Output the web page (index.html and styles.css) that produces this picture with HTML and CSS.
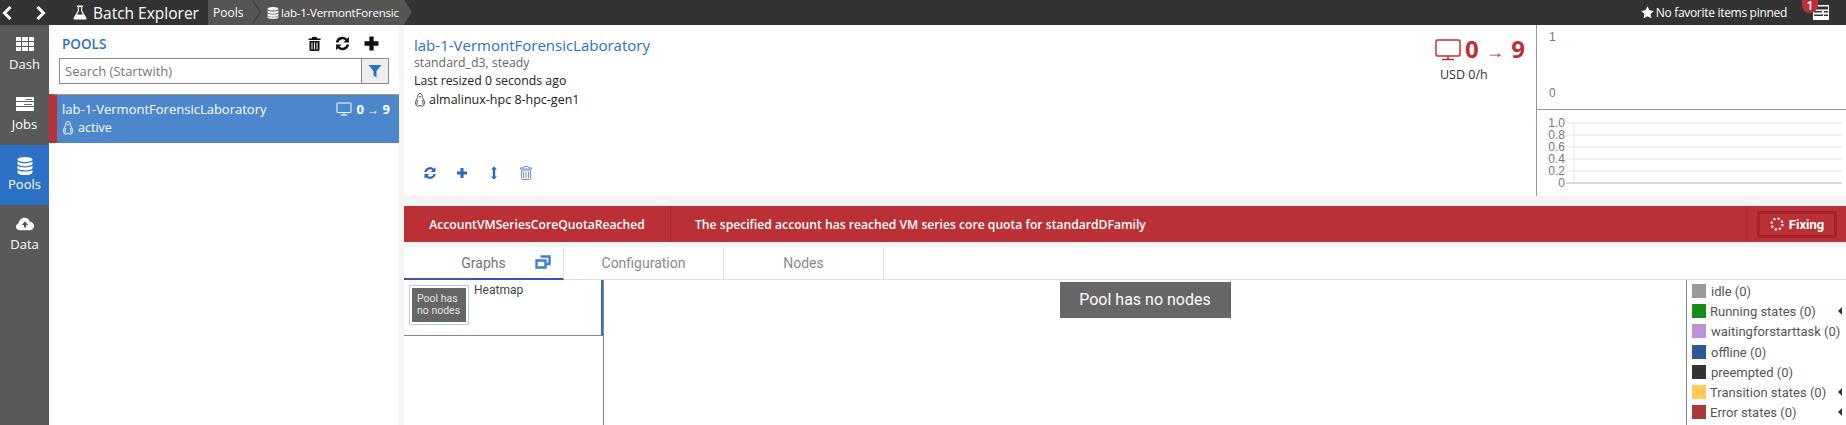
FILE: index.html
```html
<!DOCTYPE html>
<html lang="en">
<head>
<meta charset="utf-8">
<title>Batch Explorer</title>
<link rel="stylesheet" href="styles.css">
</head>
<body>
<header class="topbar">
  <svg class="nav-chevron back" viewBox="0 0 10 14"><path d="M8.500 1 2.500 7l6 6" fill="none" stroke="#fff" stroke-width="3"/></svg>
  <svg class="nav-chevron forward" viewBox="0 0 10 14"><path d="m1.500 1 6 6-6 6" fill="none" stroke="#fff" stroke-width="3"/></svg>
  <svg class="flask" viewBox="0 0 14 15"><path d="M4 .5h6v1.200H9.200v4L13.400 13c.4.900-.1 1.600-1 1.600H1.600c-.9 0-1.400-.7-1-1.600l4.200-7.300V1.700H4z" fill="#fff"/><path d="M6 2v4L4 9.500h6L8 6V2z" fill="#333"/></svg>
  <span class="app-name">Batch Explorer</span>
  <nav class="crumbs">
    <span class="crumb crumb-first">Pools</span>
    <span class="crumb crumb-second">
      <svg class="crumb-db" viewBox="0 0 12 12"><path d="M6 0c3 0 5.500.8 5.500 1.800S9 3.600 6 3.600.5 2.800.5 1.800 3 0 6 0zM.5 3.200C1.500 4.200 3.700 4.500 6 4.500s4.500-.3 5.500-1.300v1.700c0 1-2.500 1.800-5.500 1.800S.5 5.900.5 4.900zM.5 6.200c1 1 3.200 1.300 5.500 1.300s4.500-.3 5.500-1.300v1.700c0 1-2.500 1.800-5.500 1.800S.5 8.900.5 7.900zM.5 9.100c1 1 3.200 1.300 5.500 1.300s4.500-.3 5.500-1.300v1.200c0 1-2.500 1.700-5.500 1.700S.5 11.300.5 10.300z" fill="#fff"/></svg>
      <span class="crumb-text">lab-1-VermontForensic</span>
    </span>
  </nav>
  <div class="top-right">
    <svg class="star" viewBox="0 0 12 12"><path d="m6 .2 1.800 3.700 4 .6-2.900 2.800.7 4L6 9.400l-3.600 1.900.7-4L.2 4.500l4-.6z" fill="#fff"/></svg>
    <span class="fav-text">No favorite items pinned</span>
    <span class="notif">
      <svg class="notif-icon" viewBox="0 0 18 18"><path d="M1 2h16v15H1z" fill="#fff"/><path d="M2 3.500h14v3H2zM2 8h8v1.500H2zM2 11.500h9V13H2z" fill="#333"/><path d="M12 8h4v1.500h-4zM12 11.500h4V13h-4z" fill="#333"/></svg>
      <span class="badge">1</span>
    </span>
  </div>
</header>

<div class="app">
  <aside class="sidebar">
    <a class="side-item">
      <svg class="side-icon" viewBox="0 0 18 14"><path d="M0 0h5v4H0zM6 0h6v4H6zM13 0h5v4h-5zM0 5h5v4H0zM6 5h6v4H6zM13 5h5v4h-5zM0 10h5v4H0zM6 10h6v4H6zM13 10h5v4h-5z" fill="#fff"/></svg>
      <span>Dash</span>
    </a>
    <a class="side-item">
      <svg class="side-icon" viewBox="0 0 18 14"><path d="M0 0h18v4H0zM0 5h18v4H0zM0 10h18v4H0z" fill="#fff"/><path d="M10 2h6v1h-6zM8 7h8v1H8z" fill="#666"/></svg>
      <span>Jobs</span>
    </a>
    <a class="side-item side-active">
      <svg class="side-icon" viewBox="0 0 16 18"><path d="M8 0c4 0 7.500 1 7.500 2.500S12 5 8 5 .5 4 .5 2.500 4 0 8 0zM.5 4.500C2 5.800 5 6.200 8 6.200s6-.4 7.500-1.700v2.200C15.500 8 12 9.200 8 9.200S.5 8 .5 6.700zM.5 8.800C2 10 5 10.400 8 10.400s6-.4 7.500-1.600V11c0 1.300-3.500 2.400-7.500 2.400S.5 12.300.5 11zM.5 13c1.500 1.200 4.500 1.600 7.500 1.600s6-.4 7.500-1.600v2.400c0 1.400-3.500 2.600-7.500 2.600S.5 16.800.5 15.400z" fill="#fff"/></svg>
      <span>Pools</span>
    </a>
    <a class="side-item">
      <svg class="side-icon" viewBox="0 0 20 14"><path d="M4.500 14C2 14 0 12.200 0 10c0-1.800 1.200-3.200 3-3.700C3.300 3 6 0 9.500 0c2.700 0 5 1.700 5.800 4.200 2.700.2 4.700 2.400 4.700 5 0 2.700-2.200 4.800-5 4.800z" fill="#fff"/><path d="M10 4 6.500 8h2.300v3h2.400V8h2.300z" fill="#555"/></svg>
      <span>Data</span>
    </a>
  </aside>

  <section class="list-pane">
    <div class="list-head">
      <h2 class="list-title">POOLS</h2>
      <div class="list-actions">
        <svg class="act-icon" viewBox="0 0 12 14"><path d="M4 0h4l1 1.500h3V3H0V1.500h3zM1 4h10v8.500c0 .8-.6 1.500-1.400 1.500H2.400C1.600 14 1 13.300 1 12.500z" fill="#111"/><path d="M3 5.500h1v7H3zM5.500 5.500h1v7h-1zM8 5.500h1v7H8z" fill="#fff"/></svg>
        <svg class="act-icon act-wide" viewBox="0 0 14 14"><path d="M.8 6A6.200 6.200 0 0 1 11.300 2.500L13 .8V6H7.800l1.900-1.900A3.900 3.900 0 0 0 3.200 6zM13.200 8A6.200 6.200 0 0 1 2.700 11.500L1 13.200V8h5.200l-1.900 1.900a3.900 3.900 0 0 0 6.500-1.900z" fill="#111"/></svg>
        <svg class="act-icon act-wide" viewBox="0 0 14 14"><path d="M5 .5h4V5h4.500v4H9v4.500H5V9H.5V5H5z" fill="#111"/></svg>
      </div>
    </div>
    <div class="search">
      <span class="search-text">Search (Startwith)</span>
      <span class="search-btn"><svg class="filter" viewBox="0 0 14 14"><path d="M.5 1h13L8.500 7v6.500l-3-2V7z" fill="#2b71c6"/></svg></span>
    </div>
    <div class="pool-row">
      <div class="pool-main">
        <span class="pool-name">lab-1-VermontForensicLaboratory</span>
        <span class="pool-count">
          <svg class="mon" viewBox="0 0 16 14"><path d="M1.500 1h13c.3 0 .5.200.5.500v8.500c0 .3-.2.500-.5.500h-13a.5.500 0 0 1-.5-.5V1.500c0-.3.200-.5.500-.5zM8 10.500V13M4.500 13h7" fill="none" stroke="#fff" stroke-width="1"/></svg>
          <b>0 <i>→</i> 9</b>
        </span>
      </div>
      <div class="pool-state">
        <svg class="tux" viewBox="0 0 12 14"><path d="M6 .5c1.500 0 2.200 1.200 2.200 2.700 0 1.800 2.300 4.200 2.300 6.600 0 1-.3 1.700-.9 2.200.5.800-.5 1.500-1.600 1-.6-.3-1.200-.4-2-.4s-1.400.1-2 .4c-1.100.5-2.100-.2-1.600-1-.6-.5-.9-1.200-.9-2.200 0-2.400 2.300-4.800 2.300-6.600C3.800 1.700 4.500.5 6 .5zM4 7c-1 1.500-1.200 3-.7 4.500M8 7c1 1.500 1.200 3 .7 4.500" fill="none" stroke="#fff"/><path d="M4.800 3h2.400L6 4.500z" fill="#fff"/></svg>
        <span>active</span>
      </div>
    </div>
  </section>

  <main class="detail">
    <section class="summary">
      <div class="summary-info">
        <h1 class="pool-title">lab-1-VermontForensicLaboratory</h1>
        <div class="muted">standard_d3, steady</div>
        <div class="line">Last resized 0 seconds ago</div>
        <div class="line os-line">
          <svg class="tux-dark" viewBox="0 0 12 14"><path d="M6 .5c1.500 0 2.200 1.200 2.200 2.700 0 1.800 2.300 4.200 2.300 6.600 0 1-.3 1.700-.9 2.200.5.800-.5 1.500-1.600 1-.6-.3-1.200-.4-2-.4s-1.400.1-2 .4c-1.100.5-2.100-.2-1.600-1-.6-.5-.9-1.200-.9-2.200 0-2.400 2.300-4.800 2.300-6.600C3.800 1.700 4.500.5 6 .5zM4 7c-1 1.500-1.200 3-.7 4.500M8 7c1 1.500 1.200 3 .7 4.500" fill="none" stroke="#555"/><path d="M4.800 3h2.400L6 4.500z" fill="#333"/></svg>
          <span>almalinux-hpc 8-hpc-gen1</span>
        </div>
        <div class="tools">
          <svg class="tool" viewBox="0 0 14 14"><path d="M1.300 6A5.800 5.800 0 0 1 11 2.700L12.500 1.200V6H7.800l1.700-1.700A3.600 3.600 0 0 0 3.500 6zM12.700 8A5.800 5.800 0 0 1 3 11.300L1.500 12.800V8h4.700l-1.700 1.700a3.600 3.600 0 0 0 6-1.700z" fill="#2b62c4"/></svg>
          <svg class="tool" viewBox="0 0 14 14"><path d="M5.500 2h3v3.500H12v3H8.500V12h-3V8.500H2v-3h3.500z" fill="#2b62c4"/></svg>
          <svg class="tool" viewBox="0 0 14 14"><path d="M7 .5 10 3.500H8.200v7H10L7 13.500l-3-3h1.800v-7H4z" fill="#2b62c4"/></svg>
          <svg class="tool" viewBox="0 0 12 14"><path d="M4 .5h4l.7 1.300H11.500v1.200H.5V1.800h2.800zM1.500 4h9v8.500c0 .6-.4 1-1 1h-7c-.6 0-1-.4-1-1zM3.500 5.500v6.500M6 5.500v6.500M8.500 5.500v6.500" fill="none" stroke="#6f90dc"/></svg>
        </div>
      </div>
      <div class="summary-nodes">
        <div class="big-count">
          <svg class="mon-big" viewBox="0 0 26 22"><path d="M2.500 1h21c.8 0 1.500.7 1.500 1.500v13c0 .8-.7 1.500-1.500 1.500h-21c-.8 0-1.500-.7-1.500-1.500v-13C1 1.700 1.700 1 2.500 1zM13 17v3.500M7 20.500h12" fill="none" stroke="#bb2f36" stroke-width="1.500"/></svg>
          <span class="big-num">0 <i>→</i> 9</span>
        </div>
        <div class="usd">USD 0/h</div>
      </div>
      <div class="charts">
        <div class="chart-top">
          <span>1</span>
          <span>0</span>
        </div>
        <svg class="chart-bottom" width="309" height="86" viewBox="0 0 309 86">
          <g class="grid">
            <path d="M29 13h276M29 25h276M29 37h276M29 49h276M29 61h276M37 13v60"/>
          </g>
          <path class="grid-base" d="M29 73h276"/>
          <g class="axis">
            <text x="28" y="17">1.0</text>
            <text x="28" y="29">0.8</text>
            <text x="28" y="41">0.6</text>
            <text x="28" y="53">0.4</text>
            <text x="28" y="65">0.2</text>
            <text x="28" y="77">0</text>
          </g>
        </svg>
      </div>
    </section>

    <section class="banner">
      <div class="banner-code">AccountVMSeriesCoreQuotaReached</div>
      <div class="banner-msg">The specified account has reached VM series core quota for standardDFamily</div>
      <div class="banner-action">
        <button class="fix-btn">
          <svg class="spin" viewBox="0 0 14 14"><circle cx="7" cy="7" r="5.500" fill="none" stroke="#fff" stroke-width="2.200" stroke-dasharray="2.200 2.100"/></svg>
          <span>Fixing</span>
        </button>
      </div>
    </section>

    <section class="tabs-pane">
      <div class="tabs">
        <div class="tab tab-active">
          <span>Graphs</span>
          <svg class="tab-icon" viewBox="0 0 16 14"><path d="M5.500 1.500h9v7.500h-4" fill="none" stroke="#3f7fd0" stroke-width="2.400"/><path d="M1.500 5.500h9v7h-9z" fill="none" stroke="#3f7fd0" stroke-width="2.400"/></svg>
        </div>
        <div class="tab">Configuration</div>
        <div class="tab">Nodes</div>
      </div>
      <div class="tab-body">
        <div class="graph-list">
          <div class="graph-item">
            <div class="thumb"><div class="thumb-inner">Pool has<br>no nodes</div></div>
            <span class="graph-name">Heatmap</span>
          </div>
        </div>
        <div class="heatmap">
          <div class="no-nodes">Pool has no nodes</div>
        </div>
        <ul class="legend">
          <li class="lg"><span class="sw sw-idle"></span><span class="lg-text">idle (0)</span></li>
          <li class="lg lg-group"><span class="sw sw-run"></span><span class="lg-text">Running states (0)</span><span class="caret"></span></li>
          <li class="lg"><span class="sw sw-wait"></span><span class="lg-text">waitingforstarttask (0)</span></li>
          <li class="lg"><span class="sw sw-off"></span><span class="lg-text">offline (0)</span></li>
          <li class="lg"><span class="sw sw-pre"></span><span class="lg-text">preempted (0)</span></li>
          <li class="lg lg-group"><span class="sw sw-trans"></span><span class="lg-text">Transition states (0)</span><span class="caret"></span></li>
          <li class="lg lg-group"><span class="sw sw-err"></span><span class="lg-text">Error states (0)</span><span class="caret"></span></li>
        </ul>
      </div>
    </section>
  </main>
</div>
</body>
</html>
```
FILE: styles.css
```css
* { box-sizing: border-box; }
html, body { margin: 0; height: 100%; }
body {
  width: 1846px; height: 425px; overflow: hidden;
  display: flex; flex-direction: column;
  background: #f4f4f4; color: #222;
  font-family: "Open Sans", "Noto Sans", sans-serif; font-size: 13px;
}
svg { display: block; flex: none; }

.topbar { height: 25px; flex: none; background: #333; color: #fff; display: flex; align-items: center; position: relative; }
.nav-chevron { width: 10px; height: 14px; }
.back { margin-left: 2px; }
.forward { margin-left: 24px; }
.flask { width: 14px; height: 15px; margin-left: 27px; }
.app-name { margin-left: 6px; font-size: 15.500px; width: 115px; white-space: nowrap; }
.crumbs { display: flex; height: 25px; align-items: center; font-size: 12px; }
.crumb { height: 25px; background: #555; display: flex; align-items: center; position: relative; }
.crumb-first { width: 44px; padding-left: 5px; z-index: 2; }
.crumb-first::before { content: ""; position: absolute; right: -9px; top: 0; border-left: 8px solid #333; border-top: 12.500px solid transparent; border-bottom: 12.500px solid transparent; }
.crumb-first::after { content: ""; position: absolute; right: -8px; top: 0; border-left: 8px solid #555; border-top: 12.500px solid transparent; border-bottom: 12.500px solid transparent; }
.crumb-second { width: 152px; padding-left: 15px; }
.crumb-second::after { content: ""; position: absolute; right: -8px; top: 0; border-left: 8px solid #555; border-top: 12.500px solid transparent; border-bottom: 12.500px solid transparent; }
.crumb-db { width: 12px; height: 12px; margin-right: 2px; }
.crumb-text { font-size: 11.500px; letter-spacing: -.2px; white-space: nowrap; }
.top-right { margin-left: auto; display: flex; align-items: center; font-size: 12px; }
.star { width: 13px; height: 13px; margin-right: 2px; }
.fav-text { white-space: nowrap; letter-spacing: -.3px; }
.notif { width: 46px; height: 25px; position: relative; margin-left: 13px; }
.notif-icon { position: absolute; left: 12px; top: 3px; width: 18px; height: 18px; }
.badge { position: absolute; left: 2px; top: 0; width: 16px; height: 13px; border-radius: 0 0 8px 8px; background: #bb2f36; color: #fff; font-size: 12px; font-weight: 600; line-height: 11px; text-align: center; }

.app { flex: 1; display: flex; min-height: 0; }
.sidebar { width: 49px; flex: none; background: #595959; color: #fff; display: flex; flex-direction: column; }
.side-item { height: 60px; display: flex; flex-direction: column; align-items: center; padding-top: 12px; font-size: 13px; line-height: 17px; gap: 5px; }
.side-icon { width: 18px; height: 14px; }
.side-active { background: #2b71c6; padding-top: 12px; gap: 1px; }
.side-active .side-icon { width: 16px; height: 18px; }

.list-pane { width: 350px; flex: none; background: #fff; display: flex; flex-direction: column; }
.list-head { height: 33px; padding: 4px 9px 0 13px; display: flex; align-items: center; justify-content: space-between; }
.list-title { margin: 0; font-size: 13.500px; font-weight: 600; color: #2b71c6; }
.list-actions { display: flex; gap: 14px; align-items: center; padding-right: 11px; }
.act-icon { width: 13px; height: 14px; }
.act-wide { width: 15px; height: 15px; }
.search { margin-left: 10px; width: 330px; height: 26px; border: 1px solid #8a8a8a; display: flex; }
.search-text { flex: 1; padding-left: 5px; color: #777; line-height: 24px; font-size: 13px; }
.search-btn { width: 27px; background: #eee; border-left: 1px solid #8a8a8a; display: flex; align-items: center; justify-content: center; }
.filter { width: 14px; height: 14px; }
.pool-row { margin-top: 10px; height: 49px; border-top: 1px solid #999; border-left: 8px solid #bb2f36; background: #4c86cc; color: #fff; padding: 4px 9px 0 5px; }
.pool-main { display: flex; justify-content: space-between; align-items: center; height: 20px; }
.pool-name { font-size: 13px; white-space: nowrap; }
.pool-count { display: flex; align-items: center; gap: 4px; font-size: 13px; }
.pool-count b { font-weight: 700; }
.pool-count i { font: 400 12px "Liberation Sans", sans-serif; }
.mon { width: 16px; height: 14px; }
.pool-state { display: flex; align-items: center; gap: 4px; height: 17px; font-size: 12.500px; }
.tux { width: 12px; height: 14px; }

.detail { margin-left: 5px; flex: 1; min-width: 0; display: flex; flex-direction: column; }
.summary { height: 171px; background: #fff; display: flex; flex: none; }
.summary-info { flex: 1; padding: 10px 0 0 10px; display: flex; flex-direction: column; }
.pool-title { margin: 0; font-size: 15px; font-weight: 400; color: #2b71c6; line-height: 21px; white-space: nowrap; }
.muted { color: #666; font-size: 12.300px; line-height: 16px; margin-top: -1px; }
.line { font-size: 12.300px; line-height: 18px; color: #222; margin-top: 1px; }
.os-line { display: flex; align-items: center; gap: 3px; font-size: 12.500px; }
.tux-dark { width: 12px; height: 14px; }
.tools { display: flex; align-items: center; gap: 18px; margin-top: 57px; padding-left: 9px; }
.tool { width: 14px; height: 14px; }
.summary-nodes { width: 132px; flex: none; display: flex; flex-direction: column; align-items: flex-start; padding: 12px 0 0 31px; color: #bb2f36; }
.big-count { display: flex; align-items: center; gap: 4px; }
.mon-big { width: 26px; height: 22px; }
.big-num { font-size: 24px; font-weight: 700; line-height: 24px; white-space: nowrap; word-spacing: 1px; }
.big-num i { font: 400 18px "Liberation Sans", sans-serif; }
.usd { color: #333; font-size: 12.500px; margin: 4px 0 0 5px; line-height: 16px; }
.charts { width: 310px; flex: none; border-left: 1px solid #999; display: flex; flex-direction: column; }
.chart-top { height: 85px; border-bottom: 1px solid #999; padding: 4px 0 8px 12px; flex: none; display: flex; flex-direction: column; justify-content: space-between; font: 12px/16px "Liberation Sans", sans-serif; color: #777; }
.chart-bottom { flex: none; }
.grid path { stroke: #e4e4e4; fill: none; }
.grid-base { stroke: #b4b4b4; fill: none; }
.axis text { font: 12px "Liberation Sans", sans-serif; fill: #777; text-anchor: end; }

.banner { height: 36px; flex: none; margin-top: 10px; background: #bb2f36; color: #fff; display: flex; align-items: center; font-weight: 600; font-size: 12.150px; }
.banner-code { width: 267px; height: 100%; display: flex; align-items: center; justify-content: center; border-right: 1px solid #a8262d; white-space: nowrap; }
.banner-msg { flex: 1; padding-left: 24px; white-space: nowrap; }
.banner-action { width: 100px; flex: none; height: 100%; border-left: 1px solid #a8262d; padding-left: 10px; display: flex; align-items: center; }
.fix-btn { width: 80px; height: 27px; padding: 0; background: #bb2f36; border: 3px solid #a3232a; border-radius: 3px; color: #fff; display: flex; align-items: center; justify-content: center; gap: 5px; font: 700 13px Roboto, sans-serif; }
.spin { width: 14px; height: 14px; }

.tabs-pane { margin-top: 5px; flex: 1; background: #fff; display: flex; flex-direction: column; min-height: 0; }
.tabs { height: 33px; flex: none; display: flex; border-bottom: 1px solid #e0e0e0; font: 14px Roboto, sans-serif; color: #8a8a8a; }
.tab { width: 160px; height: 32px; border-right: 1px solid #e0e0e0; display: flex; align-items: center; justify-content: center; position: relative; }
.tab-active { color: #757575; border-bottom: 2px solid #3f51b5; height: 33px; }
.tab-icon { position: absolute; right: 12px; top: 8px; width: 16px; height: 14px; }
.tab-body { flex: 1; display: flex; min-height: 0; }
.graph-list { width: 200px; flex: none; border-right: 1px solid #888; }
.graph-item { height: 56px; border-bottom: 1px solid #888; border-right: 2px solid #2b71c6; padding: 5px 0 0 5px; display: flex; gap: 5px; font: 12px Roboto, sans-serif; color: #444; width: 199px; }
.thumb { width: 60px; height: 40px; border: 1px solid #b8d0ec; padding: 2px; flex: none; }
.thumb-inner { height: 100%; background: #666; color: #e4e4e4; font: 10.500px/12px Roboto, sans-serif; padding: 5px 0 0 5px; }
.graph-name { line-height: 10px; }
.heatmap { flex: 1; min-width: 0; display: flex; justify-content: center; align-items: flex-start; padding-top: 2px; }
.no-nodes { width: 171px; height: 36px; background: #666; color: #fff; font: 16px/36px Roboto, sans-serif; text-align: center; }
.legend { width: 160px; flex: none; list-style: none; margin: 0; padding: 4px 0 0 5px; border-left: 1px solid #888; font: 13px Roboto, sans-serif; color: #555; }
.lg { height: 20.200px; display: flex; align-items: flex-start; gap: 5px; position: relative; white-space: nowrap; line-height: 15px; }
.lg-group { gap: 4px; }
.sw { width: 14px; height: 14px; flex: none; }
.sw-idle { background: #9a9a9a; }
.sw-run { background: #178d17; }
.sw-wait { background: #bd93d8; }
.sw-off { background: #2f5898; }
.sw-pre { background: #333; }
.sw-trans { background: #ffc95c; }
.sw-err { background: #aa3939; }
.caret { position: absolute; right: 4px; top: 3px; border-right: 4px solid #333; border-top: 4px solid transparent; border-bottom: 4px solid transparent; }
```
